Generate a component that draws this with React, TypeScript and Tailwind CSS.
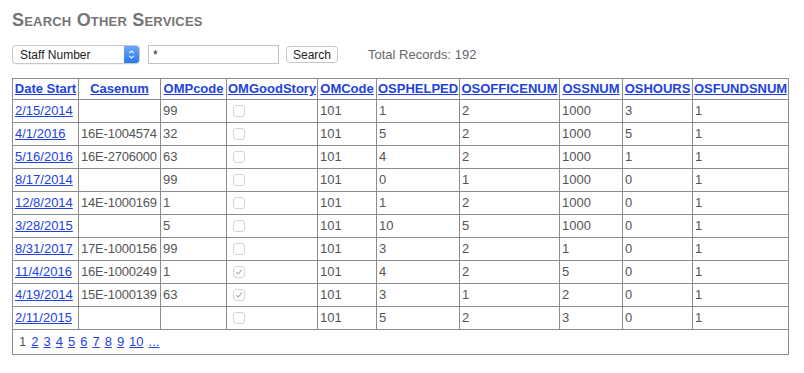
import React from "react";

type Row = {
  date: string;
  casenum: string;
  omp: string;
  good: boolean;
  omcode: string;
  helped: string;
  office: string;
  ss: string;
  hours: string;
  funds: string;
};

const rows: Row[] = [
  { date: "2/15/2014", casenum: "", omp: "99", good: false, omcode: "101", helped: "1", office: "2", ss: "1000", hours: "3", funds: "1" },
  { date: "4/1/2016", casenum: "16E-1004574", omp: "32", good: false, omcode: "101", helped: "5", office: "2", ss: "1000", hours: "5", funds: "1" },
  { date: "5/16/2016", casenum: "16E-2706000", omp: "63", good: false, omcode: "101", helped: "4", office: "2", ss: "1000", hours: "1", funds: "1" },
  { date: "8/17/2014", casenum: "", omp: "99", good: false, omcode: "101", helped: "0", office: "1", ss: "1000", hours: "0", funds: "1" },
  { date: "12/8/2014", casenum: "14E-1000169", omp: "1", good: false, omcode: "101", helped: "1", office: "2", ss: "1000", hours: "0", funds: "1" },
  { date: "3/28/2015", casenum: "", omp: "5", good: false, omcode: "101", helped: "10", office: "5", ss: "1000", hours: "0", funds: "1" },
  { date: "8/31/2017", casenum: "17E-1000156", omp: "99", good: false, omcode: "101", helped: "3", office: "2", ss: "1", hours: "0", funds: "1" },
  { date: "11/4/2016", casenum: "16E-1000249", omp: "1", good: true, omcode: "101", helped: "4", office: "2", ss: "5", hours: "0", funds: "1" },
  { date: "4/19/2014", casenum: "15E-1000139", omp: "63", good: true, omcode: "101", helped: "3", office: "1", ss: "2", hours: "0", funds: "1" },
  { date: "2/11/2015", casenum: "", omp: "", good: false, omcode: "101", helped: "5", office: "2", ss: "3", hours: "0", funds: "1" },
];

const headers = [
  "Date Start",
  "Casenum",
  "OMPcode",
  "OMGoodStory",
  "OMCode",
  "OSPHELPED",
  "OSOFFICENUM",
  "OSSNUM",
  "OSHOURS",
  "OSFUNDSNUM",
];

const widths = [66, 82, 66, 91, 59, 83, 100, 63, 70, 96];

function Check({ checked }: { checked: boolean }) {
  return (
    <span className="ml-[4px] mt-[1px] flex h-[12px] w-[12px] items-center justify-center rounded-[3px] border border-[#d4d4d4] bg-white">
      {checked && (
        <svg viewBox="0 0 10 10" className="h-[8px] w-[8px]">
          <path d="M1.5 5.2 L4 7.6 L8.6 2" fill="none" stroke="#a8a8a8" strokeWidth="1.3" />
        </svg>
      )}
    </span>
  );
}

const td = "border border-[#8c8c8c] px-[2px] h-[23px] align-middle whitespace-nowrap overflow-visible";
const link = "text-[#2242e0] underline";

export default function App() {
  return (
    <div className="min-h-[373px] w-[804px] bg-white pl-[12px] pt-[9px] text-[13px] text-[#555]" style={{ fontFamily: '"Liberation Sans", Arial, sans-serif' }}>
      <h1 className="text-[18px] font-bold leading-[22px] tracking-[0.2px] text-[#757575] [font-variant:small-caps]">
        Search Other Services
      </h1>

      <div className="mt-[14px] flex h-[19px] items-center">
        <div className="flex h-[19px] w-[128px] items-center justify-between rounded-[4px] border border-[#c8c8c8] bg-white pl-[7px] shadow-[0_1px_0_rgba(0,0,0,0.04)]">
          <span className="text-[12px] text-[#222]">Staff Number</span>
          <span className="flex h-[17px] w-[15px] items-center justify-center rounded-r-[3px] bg-gradient-to-b from-[#6aa8f7] to-[#2a78ef]">
            <svg viewBox="0 0 8 12" className="h-[11px] w-[7px]">
              <path d="M1.5 4.5 L4 2 L6.5 4.5 M1.5 7.5 L4 10 L6.5 7.5" fill="none" stroke="white" strokeWidth="1.2" />
            </svg>
          </span>
        </div>
        <div className="ml-[8px] flex h-[19px] w-[131px] items-center border border-[#c3c3c3] bg-white pl-[4px] text-[12px] text-[#222]">
          *
        </div>
        <button className="ml-[7px] flex h-[17px] w-[52px] items-center justify-center rounded-[4px] border border-[#c6c6c6] bg-white text-[12px] text-[#222]">
          Search
        </button>
        <span className="ml-[30px] text-[13px] text-[#666]">Total Records: 192</span>
      </div>

      <table className="mt-[14px] w-[776px] table-fixed border-collapse border border-[#8c8c8c]">
        <colgroup>
          {widths.map((w, i) => (
            <col key={i} style={{ width: w }} />
          ))}
        </colgroup>
        <thead>
          <tr>
            {headers.map((h) => (
              <th key={h} className="h-[20px] whitespace-nowrap border border-[#8c8c8c] px-[1px] text-center font-bold">
                <a className={link}>{h}</a>
              </th>
            ))}
          </tr>
        </thead>
        <tbody>
          {rows.map((r) => (
            <tr key={r.date}>
              <td className={td}>
                <a className={link}>{r.date}</a>
              </td>
              <td className={td}>
                <span className="tracking-[-0.2px]">{r.casenum}</span>
              </td>
              <td className={td}>{r.omp}</td>
              <td className={td}>
                <Check checked={r.good} />
              </td>
              <td className={td}>{r.omcode}</td>
              <td className={td}>{r.helped}</td>
              <td className={td}>{r.office}</td>
              <td className={td}>{r.ss}</td>
              <td className={td}>{r.hours}</td>
              <td className={td}>{r.funds}</td>
            </tr>
          ))}
          <tr>
            <td colSpan={10} className="h-[25px] border border-[#8c8c8c] pl-[6px] align-middle">
              <span className="flex gap-[5px]">
                <span>1</span>
                {["2", "3", "4", "5", "6", "7", "8", "9", "10", "..."].map((p) => (
                  <a key={p} className={link}>
                    {p}
                  </a>
                ))}
              </span>
            </td>
          </tr>
        </tbody>
      </table>
    </div>
  );
}
